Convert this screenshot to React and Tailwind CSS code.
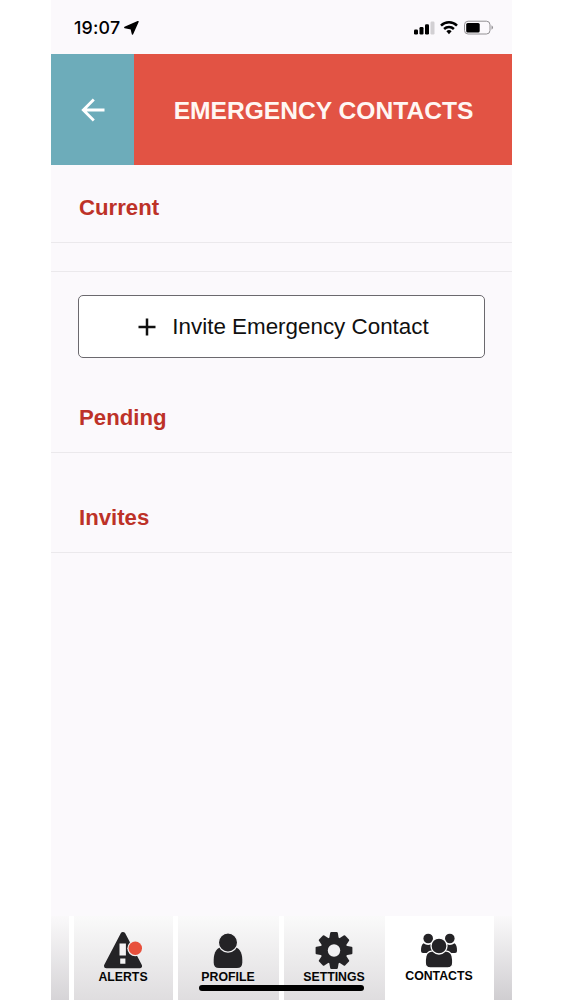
import React from "react";

function StatusBar() {
  return (
    <div className="flex h-[54px] shrink-0 items-start pt-[16px] pl-[23px] pr-[18px]">
      <span className="mt-px font-['Inter',sans-serif] text-[17.8px] leading-[22px] font-medium tracking-[0.2px] text-black">19:07</span>
      <svg className="ml-[4px] mt-[5px]" width="15" height="14" viewBox="0 0 15 14">
        <path d="M14 .6 8.5 13 7.200 7.800 .8 6.500Z" fill="#000" stroke="#000" strokeWidth="1.400" strokeLinejoin="round" />
      </svg>
      <div className="ml-auto flex pt-[4px]">
        <svg width="22" height="15" viewBox="0 0 22 15">
          <rect x="1" y="9.5" width="4" height="5" rx="1.2" />
          <rect x="6.5" y="7" width="4" height="7.5" rx="1.2" />
          <rect x="12" y="4.2" width="4" height="10.3" rx="1.2" />
          <rect x="17.5" y="1.5" width="4" height="13" rx="1.2" fill="#d2d0d3" />
        </svg>
        <svg className="ml-[5px]" width="18" height="15" viewBox="0 0 18 15">
          <g fill="none" stroke="#000" strokeWidth="2.5">
            <path d="M1 5.6a11.4 11.4 0 0 1 16 0" />
            <path d="M4.1 9a7.1 7.1 0 0 1 9.8 0" />
          </g>
          <path d="M6.4 11.2a3.9 3.9 0 0 1 5.2 0L9 14.2Z" />
        </svg>
        <svg className="ml-[5px]" width="31" height="15" viewBox="0 0 31 15">
          <rect x="1.500" y="1.2" width="25.5" height="12.8" rx="3.6" fill="none" stroke="#929093" />
          <rect x="3.200" y="3" width="13.5" height="9.4" rx="1.500" />
          <path d="M28.500 5.3q3 2.2 0 4.5Z" fill="#929093" />
        </svg>
      </div>
    </div>
  );
}

function SectionTitle({ children, className }) {
  return (
    <h2 className={"shrink-0 border-b border-[#ebe9ec] pl-[28px] text-[22.2px] leading-[26px] font-bold text-[#bd3228] " + className}>
      {children}
    </h2>
  );
}

function AlertIcon() {
  return (
    <svg width="46" height="40" viewBox="0 0 46 40">
      <path d="M23 4.5 39.5 35.8H6.5Z" fill="#242326" stroke="#242326" strokeWidth="5" strokeLinejoin="round" />
      <path d="M19.500 13.500h6.400v12h-6.400zM20.200 28.500h5.200v5.200h-5.200z" fill="#f4f3f4" />
      <circle cx="35.3" cy="18.300" r="8" fill="#f0eff0" />
      <circle cx="35.3" cy="18.300" r="6.7" fill="#e8503c" />
    </svg>
  );
}

function ProfileIcon() {
  return (
    <svg width="46" height="40" viewBox="0 0 46 40">
      <path d="M8.700 30c0-8.500 3.800-12.500 8.300-13h12c4.500.5 8.300 4.500 8.300 13v2.500c0 3.700-1.800 5.500-5.300 5.500H14c-3.500 0-5.300-1.800-5.300-5.500Z" fill="#242326" />
      <circle cx="23" cy="12.500" r="9.600" fill="#242326" stroke="#f1f0f2" strokeWidth="1.200" />
    </svg>
  );
}

function SettingsIcon() {
  return (
    <svg width="46" height="40" viewBox="0 0 46 40">
      <g fill="#242326" transform="translate(23 20.500)">
        <circle r="13.500" />
        {[0, 45, 90, 135, 180, 225, 270, 315].map((angle) => (
          <path key={angle} d="M-4.800 -12 -3.800 -17.500Q-3.600 -18.400-2.700 -18.400H2.700Q3.600-18.400 3.800-17.500L4.800-12Z" transform={`rotate(${angle})`} />
        ))}
        <circle r="6.200" fill="#f1f0f2" />
      </g>
    </svg>
  );
}

function ContactsIcon() {
  return (
    <svg width="46" height="40" viewBox="0 -1 46 40">
      <g fill="#242326">
        <circle cx="12.200" cy="8.500" r="4.800" />
        <circle cx="33.800" cy="8.500" r="4.800" />
        <path d="M7.500 13.300q4.500 3.300 9.500 0l4 9.700H7q-2 0-2-2c0-4 .5-6.200 2.500-7.700Z" />
        <path d="M38.500 13.300q-4.500 3.300-9.500 0l-4 9.700h14q2 0 2-2c0-4-.5-6.200-2.500-7.700Z" />
        <path d="M9.300 30c0-6 3.200-9 7.200-9.200h13c4 .2 7.200 3.200 7.200 9.200v2.500c0 4-1.600 5.400-5 5.400H14.300c-3.400 0-5-1.400-5-5.400Z" stroke="#fff" strokeWidth="1.200" />
        <circle cx="23" cy="16" r="8" stroke="#fff" strokeWidth="1.300" />
      </g>
    </svg>
  );
}

function Tab({ icon, label, className }) {
  return (
    <button className={"flex h-[84px] flex-col items-center pr-px " + className}>
      {icon}
      <span className="text-[12.3px] leading-[14px] font-bold text-[#050505]">{label}</span>
    </button>
  );
}

const shade = "bg-linear-to-b from-[#fafafa] to-[#dfdddf] pt-[14px]";

export default function App() {
  return (
    <div className="flex h-[1000px] w-[563px] justify-center overflow-hidden bg-white font-['Liberation_Sans',Arial,sans-serif]">
      <main className="relative flex w-[461px] flex-col bg-[#fbf9fc]">
        <StatusBar />
        <header className="flex h-[111px] shrink-0">
          <button aria-label="Back" className="flex w-[83px] items-center justify-center bg-[#6dacba]">
            <svg width="24" height="24" viewBox="0 0 24 24" fill="none" stroke="#fff" strokeWidth="2.800">
              <path d="M23.500 12H2.500M12.800 1.500 2.300 12l10.500 10.500" />
            </svg>
          </button>
          <div className="flex flex-1 items-center justify-center bg-[#e25344] pt-[2px] pl-px">
            <h1 className="text-[24.6px] leading-[30px] font-bold whitespace-nowrap text-[#fff7f3]">EMERGENCY CONTACTS</h1>
          </div>
        </header>
        <SectionTitle className="h-[78px] pt-[30px]">Current</SectionTitle>
        <div className="h-[29px] shrink-0 border-b border-[#ebe9ec]" />
        <button className="mx-[27px] mt-[23px] flex h-[63px] shrink-0 items-center justify-center gap-[16px] rounded-[5px] border border-[#6b696e] bg-white pl-[4px] text-[22.4px] text-[#101010]">
          <svg width="18" height="18" viewBox="0 0 18 18" fill="none" stroke="#101010" strokeWidth="2.500">
            <path d="M9 .5v17M.5 9h17" />
          </svg>
          <span>Invite Emergency Contact</span>
        </button>
        <SectionTitle className="mt-[28px] h-[67px] pt-[19px]">Pending</SectionTitle>
        <SectionTitle className="h-[100px] pt-[52px]">Invites</SectionTitle>
        <nav className="mt-auto flex h-[84px] shrink-0 gap-[5px] bg-white">
          <div className="w-[18px] bg-linear-to-b from-[#faf9fa] to-[#d6d4d7]" />
          <Tab icon={<AlertIcon />} label="ALERTS" className={"w-[99px] " + shade} />
          <Tab icon={<ProfileIcon />} label="PROFILE" className={"w-[101px] " + shade} />
          <Tab icon={<SettingsIcon />} label="SETTINGS" className={"w-[101px] " + shade} />
          <Tab icon={<ContactsIcon />} label="CONTACTS" className="w-[99px] bg-white pt-[13px]" />
          <div className="flex-1 bg-linear-to-b from-[#faf9fa] to-[#d0ced1]" />
        </nav>
        <div className="absolute bottom-[9px] left-[148px] h-[6px] w-[165px] rounded-full bg-black" />
      </main>
    </div>
  );
}
